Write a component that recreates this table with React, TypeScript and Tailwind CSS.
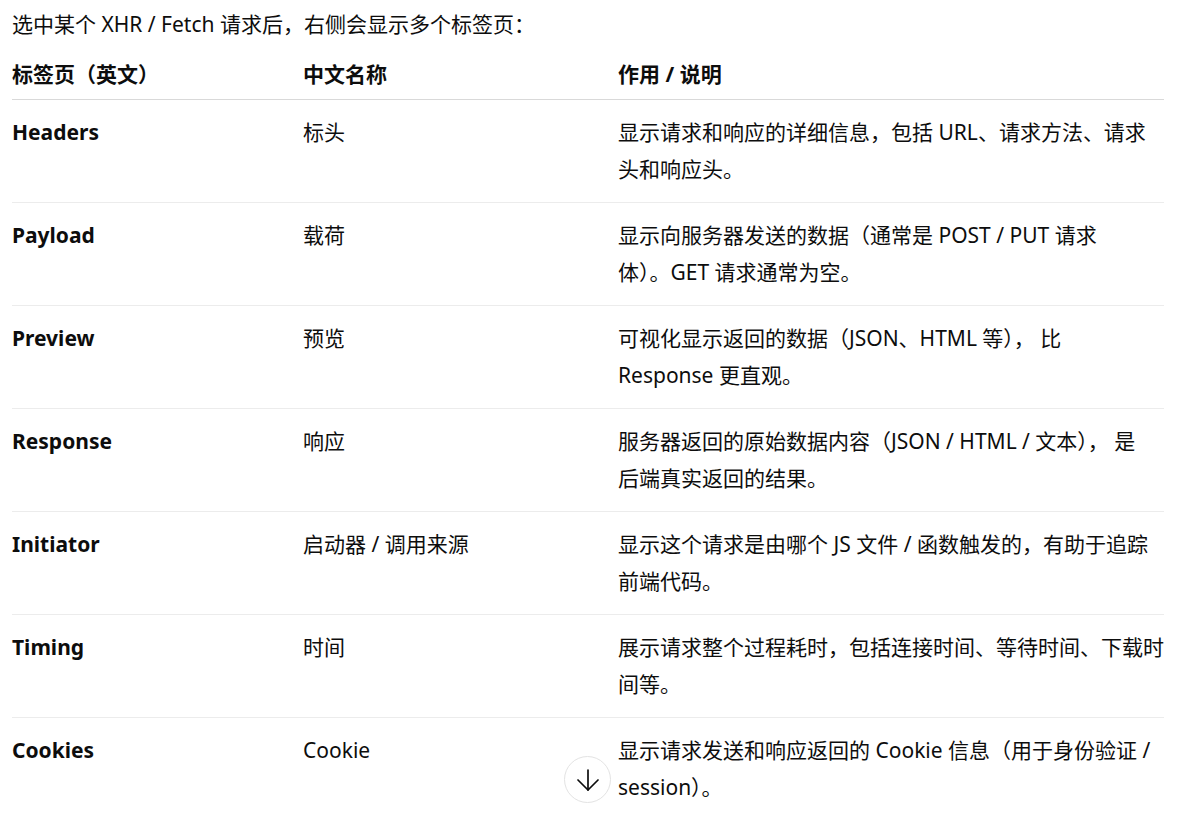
const rows: { en: string; zh: string; desc: string[] }[] = [
  { en: "Headers", zh: "标头", desc: ["显示请求和响应的详细信息，包括 URL、请求方法、请求", "头和响应头。"] },
  { en: "Payload", zh: "载荷", desc: ["显示向服务器发送的数据（通常是 POST / PUT 请求", "体）。GET 请求通常为空。"] },
  { en: "Preview", zh: "预览", desc: ["可视化显示返回的数据（JSON、HTML 等）， 比", "Response 更直观。"] },
  { en: "Response", zh: "响应", desc: ["服务器返回的原始数据内容（JSON / HTML / 文本）， 是", "后端真实返回的结果。"] },
  { en: "Initiator", zh: "启动器 / 调用来源", desc: ["显示这个请求是由哪个 JS 文件 / 函数触发的，有助于追踪", "前端代码。"] },
  { en: "Timing", zh: "时间", desc: ["展示请求整个过程耗时，包括连接时间、等待时间、下载时", "间等。"] },
  { en: "Cookies", zh: "Cookie", desc: ["显示请求发送和响应返回的 Cookie 信息（用于身份验证 /", "session）。"] },
];

export default function App() {
  return (
    <div
      className="relative h-[824px] overflow-hidden bg-white text-[#0d0d0d] text-[21px] leading-[37px]"
      style={{ fontFamily: '"Noto Sans", "Noto Sans CJK SC", sans-serif' }}
    >
      <div className="pl-3 pt-[6px]">
        <p>选中某个 XHR / Fetch 请求后，右侧会显示多个标签页：</p>

        <div className="mt-[13px] w-[1152px]">
          <div className="grid grid-cols-[291px_315px_546px] border-b border-[#d9d9d9] pb-[6px] font-bold">
            <div>标签页（英文）</div>
            <div>中文名称</div>
            <div>作用 / 说明</div>
          </div>
          {rows.map((r) => (
            <div
              key={r.en}
              className="grid grid-cols-[291px_315px_546px] border-b border-[#ececec] py-[14px] last:border-b-0"
            >
              <div className="font-bold">{r.en}</div>
              <div>{r.zh}</div>
              <div className="whitespace-nowrap">
                {r.desc[0]}
                <br />
                {r.desc[1]}
              </div>
            </div>
          ))}
        </div>
      </div>

      <button className="absolute bottom-[21px] left-[564px] flex h-[47px] w-[47px] items-center justify-center rounded-full border border-[#e3e3e3] bg-white">
        <svg width="22" height="22" viewBox="0 0 22 22" fill="none" stroke="#0d0d0d" strokeWidth="1.7" strokeLinecap="round" strokeLinejoin="round">
          <path d="M11 1v20" />
          <path d="M1 11l10 10 10-10" />
        </svg>
      </button>
    </div>
  );
}
